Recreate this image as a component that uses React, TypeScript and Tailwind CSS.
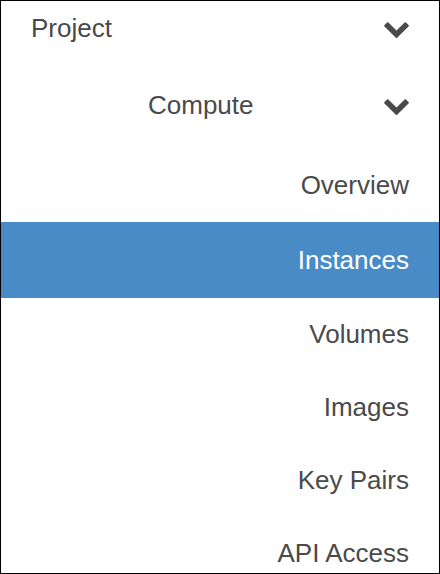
import { FC } from "react";

const Chevron: FC = () => (
  <svg viewBox="90 520 1612 1048" className="w-[25px] h-[16px] mt-[4px]" fill="#4a4a4a">
    <path d="M1683 808l-742 741q-19 19-45 19t-45-19l-742-741q-19-19-19-45.5t19-45.5l166-165q19-19 45-19t45 19l531 531 531-531q19-19 45-19t45 19l166 165q19 19 19 45.5t-19 45.5z" />
  </svg>
);

const items = ["Volumes", "Images", "Key Pairs", "API Access"];

const App: FC = () => {
  return (
    <div
      className="w-[440px] h-[574px] border border-black bg-white overflow-hidden text-[26px] text-[#4a4a4a]"
      style={{ fontFamily: '"Liberation Sans", Arial, sans-serif' }}
    >
      {/* Project header */}
      <div className="h-[54px] flex items-center justify-between pl-[30px] pr-[30px]">
        <span>Project</span>
        <Chevron />
      </div>

      {/* Compute group */}
      <div className="mt-[13px] h-[74px] flex items-center justify-between pl-[147px] pr-[30px]">
        <span>Compute</span>
        <Chevron />
      </div>

      <div className="mt-[6px] h-[74px] flex items-center justify-end pr-[30px]">
        Overview
      </div>
      <div className="h-[76px] flex items-center justify-end pr-[30px] bg-[#488bc6] text-white">
        Instances
      </div>
      {items.map((item) => (
        <div key={item} className="h-[73px] flex items-center justify-end pr-[30px]">
          {item}
        </div>
      ))}
    </div>
  );
};

export default App;
